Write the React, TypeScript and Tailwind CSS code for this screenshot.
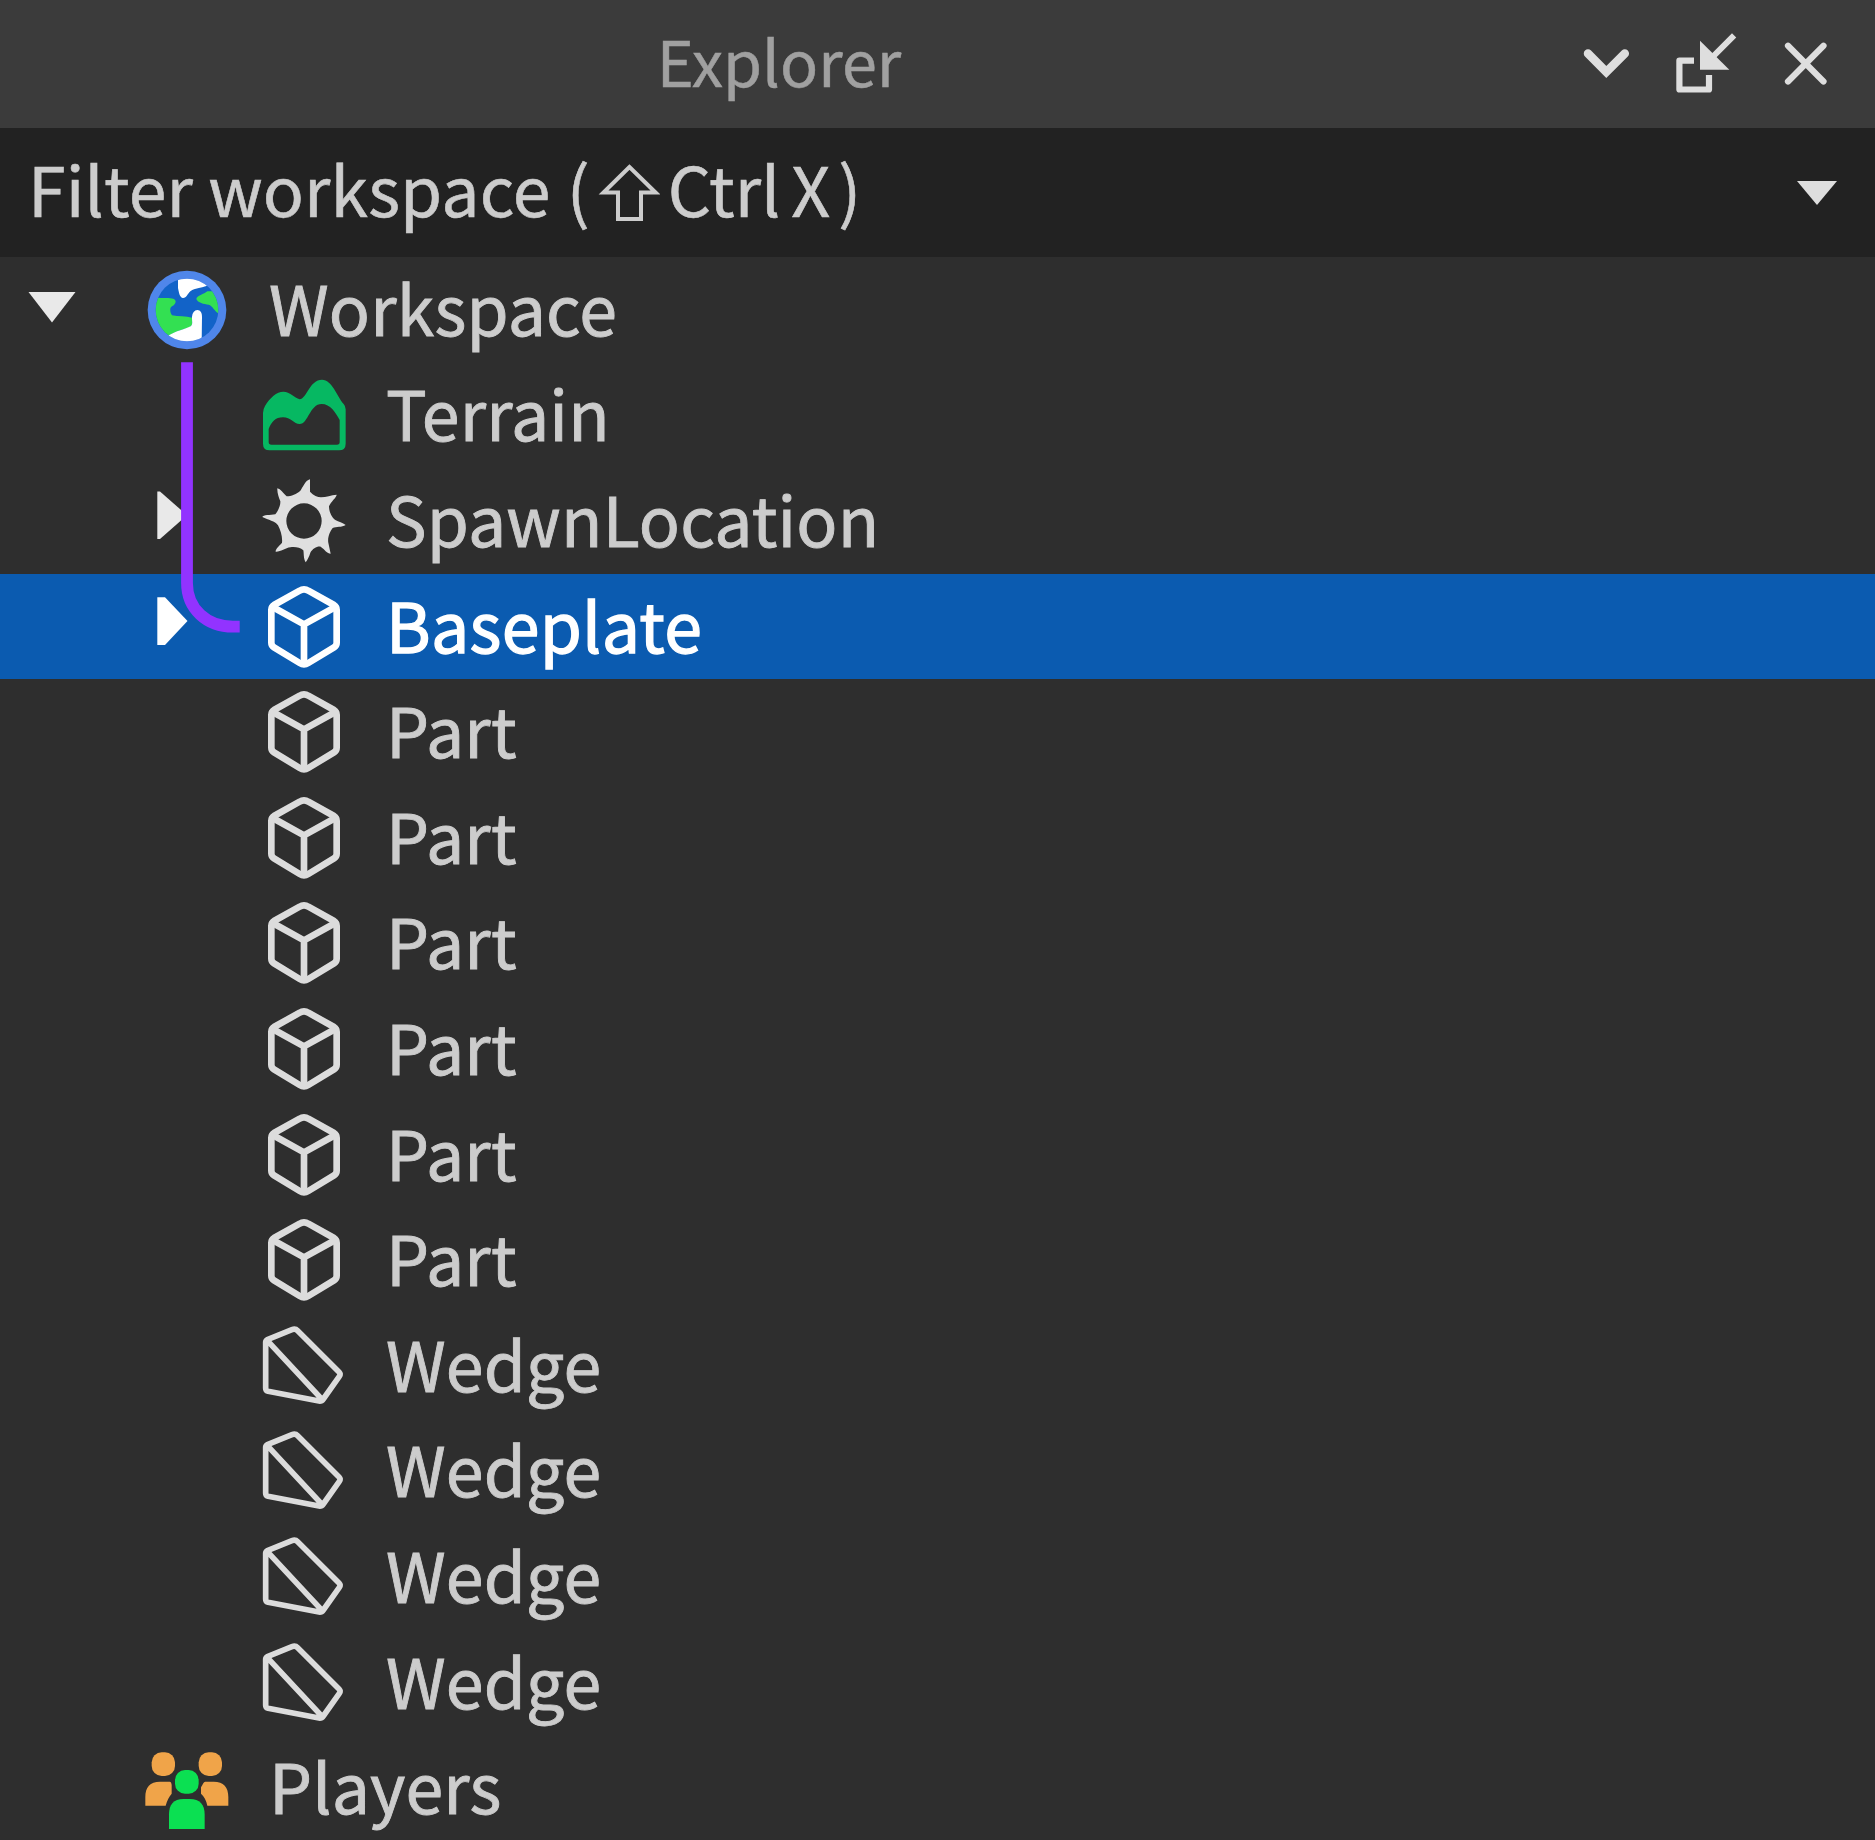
type Kind = "globe" | "terrain" | "spawn" | "cube" | "wedge" | "players";
type Item = { label: string; kind: Kind; depth: 0 | 1; arrow?: "down" | "right"; selected?: boolean };

const part: Item = { label: "Part", kind: "cube", depth: 1 };
const wedge: Item = { label: "Wedge", kind: "wedge", depth: 1 };
const items: Item[] = [
  { label: "Workspace", kind: "globe", depth: 0, arrow: "down" },
  { label: "Terrain", kind: "terrain", depth: 1 },
  { label: "SpawnLocation", kind: "spawn", depth: 1, arrow: "right" },
  { label: "Baseplate", kind: "cube", depth: 1, arrow: "right", selected: true },
  part, part, part, part, part, part,
  wedge, wedge, wedge, wedge,
  { label: "Players", kind: "players", depth: 0 },
];

function Icon({ kind }: { kind: Kind }) {
  const cls = "h-[88px] w-[88px] shrink-0";
  switch (kind) {
    case "globe":
      return (
        <svg className={cls} viewBox="39 32 264 264">
          <circle cx="171" cy="164" r="118" fill="#4f86ea" />
          <clipPath id="disc"><circle cx="171" cy="164" r="94" /></clipPath>
          <g clipPath="url(#disc)">
            <rect x="70" y="60" width="200" height="200" fill="#1263c8" />
            <path d="M144 60V98C147 112 148 124 158 128C170 129 172 115 182 107C195 98 210 99 232 91V60Z" fill="#fff" />
            <path d="M70 126C95 131 112 124 132 131C142 138 135 148 126 153C118 158 120 172 126 180C145 184 168 182 186 187C188 205 187 213 176 217C155 222 132 230 116 242L70 240Z" fill="#33e052" />
            <path d="M232 108C222 117 200 121 199 131C203 143 222 146 236 148C248 152 254 168 270 178V108Z" fill="#33e052" />
            <path d="M110 244C140 225 165 222 182 213C190 207 185 196 186 184C187 172 193 165 202 164C212 165 216 172 216 184L215 265H110Z" fill="#fff" />
          </g>
        </svg>
      );
    case "terrain":
      return (
        <svg className={cls} viewBox="30 4 264 264">
          <path fillRule="evenodd" fill="#06b862" d="M39 130Q39 119 45 109C60 84 80 66 100 66C120 66 133 84 149 89C172 85 179 30 216 30C246 30 260 78 281 103Q287 110 287 119V222Q287 242 267 242H59Q39 242 39 222ZM56 178V217Q56 225 64 225H261Q269 225 269 217V151C256 127 241 103 215 103C179 103 175 163 149 163C132 163 122 143 99 143C76 143 64 157 56 178Z" />
        </svg>
      );
    case "spawn":
      return (
        <svg className={cls} viewBox="30 321 264 264">
          <path fillRule="evenodd" fill="#dfdfdf" d="M180 328V365C190 376 203 382 213 382C229 382 243 375 260 374C260 382 242 395 237 409C237 423 244 442 256 450C266 455 278 459 287 465C275 473 259 469 248 474C240 484 232 503 235 518L242 551C231 551 225 539 212 530C201 528 188 536 181 548C178 558 172 571 167 577C160 566 162 550 160 541C150 532 135 530 121 532C106 534 91 546 77 545C76 536 90 526 96 518C98 502 92 481 84 466C75 452 55 451 37 441C39 434 61 436 76 433C84 423 92 406 91 394C87 384 81 368 82 355C92 357 99 369 110 379C124 379 140 372 151 362C159 352 165 332 180 328ZM162 400A53 53 0 1 0 162 506A53 53 0 1 0 162 400Z" />
        </svg>
      );
    case "cube":
      return (
        <svg className={cls} viewBox="780 308 264 264" fill="none" stroke="currentColor" strokeWidth="20" strokeLinejoin="round">
          <path d="M912 327Q919 327 925 331L1002 374Q1010 379 1010 388V487Q1010 496 1002 501L925 548Q912 556 899 548L822 501Q814 496 814 487V388Q814 379 822 374L899 331Q905 327 912 327Z" />
          <path d="M818 380L912 432L1006 380M912 432V552" />
        </svg>
      );
    case "wedge":
      return (
        <svg className={cls} viewBox="30 36 264 264" fill="none" stroke="#dcdcdc" strokeWidth="17" strokeLinejoin="round">
          <path d="M47 97Q47 92 52 89L126 59Q136 55 143 62L267 186Q273 192 268 199L220 267Q215 274 207 273L54 244Q47 242 47 235ZM52 92L216 268" />
        </svg>
      );
    case "players":
      return (
        <svg className={cls} viewBox="39 28 264 264">
          <g fill="#f0a449">
            <rect x="65" y="53" width="70" height="71" rx="30" />
            <rect x="206" y="53" width="70" height="71" rx="30" />
            <path d="M46 213V187C46 158 60 141 90 141H119Q124 141 125 151V177C117 186 111 198 107 213Z" />
            <path d="M295 213V187C295 158 281 141 251 141H226C220 142 219 149 213 158V177C222 184 229 198 232 213Z" />
          </g>
          <rect x="135" y="106" width="71" height="71" rx="30" fill="#0be052" />
          <path d="M117 283V239C117 210 131 193 160 193H180C209 193 224 210 224 239V283Z" fill="#0be052" />
        </svg>
      );
  }
}

function Arrow({ dir, selected }: { dir?: "down" | "right"; selected?: boolean }) {
  return (
    <svg className="h-[106px] w-[143px] shrink-0" viewBox="0 0 143 106" fill={selected ? "#fff" : "#e9e9e9"}>
      {dir === "down" && <path d="M28.5 35H75.5L52 65.5Z" />}
      {dir === "right" && <path d={selected ? "M40.3 23.2H48L70.5 47L48 71H40.3Z" : "M40.3 23.5H43L70 47.2L43 71H40.3Z"} />}
    </svg>
  );
}

function Row({ item }: { item: Item }) {
  const tone = item.selected ? "bg-[#0b5bb0] text-white" : "text-[#cccccc]";
  const label = item.selected
    ? "tracking-[0.3px] [-webkit-text-stroke:1.3px_#fff]"
    : "tracking-[0.15px] [-webkit-text-stroke:0.9px_#cccccc]";
  return (
    <div className={`flex h-[105.6px] shrink-0 items-center ${tone} ${item.depth ? "pl-[117px]" : ""}`}>
      <Arrow dir={item.arrow} selected={item.selected} />
      <span className={`flex ${item.selected ? "text-white" : "text-[#dcdcdc]"}`}><Icon kind={item.kind} /></span>
      <span className={`-mt-[6px] ml-[38px] text-[68px] leading-[100px] whitespace-pre ${label}`}>{item.label}</span>
    </div>
  );
}

export default function App() {
  return (
    <div className="relative flex h-[1840px] w-[1875px] flex-col overflow-hidden bg-[#2e2e2e] font-['Noto_Sans_CJK_SC','Noto_Sans',sans-serif]">
      <header className="flex h-32 shrink-0 items-center bg-[#3b3b3b]">
        <h1 className="-mt-[9px] w-[1558px] text-center text-[63px] leading-[90px] font-normal text-[#a0a0a0] [-webkit-text-stroke:0.5px_#a0a0a0]">Explorer</h1>
        <svg className="h-32 w-[317px]" viewBox="1558 0 317 128" fill="none" stroke="#dedede" strokeLinecap="round">
          <path d="M1588 53.5L1606.3 72L1624.8 53.5" strokeWidth="8.5" />
          <path d="M1694 60.7H1679.4V89.5H1709V75" strokeWidth="6.2" strokeLinecap="butt" strokeLinejoin="round" />
          <path d="M1700 40.7V69.7H1729.3Z" fill="#dedede" stroke="none" />
          <path d="M1710 59.5L1732 37.5" strokeWidth="6" strokeLinecap="square" />
          <path d="M1788 45.8L1823.5 81.5M1823.5 45.8L1788 81.5" strokeWidth="6.2" />
        </svg>
      </header>
      <div className="flex h-[129px] shrink-0 items-center justify-between bg-[#222222] text-[68px] leading-[100px] text-[#cccccc]">
        <div className="-mt-[10px] flex items-center whitespace-pre pl-[28px] [-webkit-text-stroke:0.6px_#cccccc]">
          <span className="tracking-[0.12px]">Filter workspace</span>
          <span className="ml-4">(</span>
          <svg className="mt-2 ml-[8px] h-[64px] w-[62px]" viewBox="598 159 62 64" fill="none" stroke="#cccccc" strokeWidth="4">
            <path d="M629.5 166L603.5 191.5H618V218H641V191.5H655.5Z" />
          </svg>
          <span className="ml-2">Ctrl</span>
          <span className="ml-[11px]">X</span>
          <span className="ml-2">)</span>
        </div>
        <svg className="mr-[37px] h-6 w-[42px]" viewBox="0 0 42 24" fill="#dedede"><path d="M1 0H41L21 24Z" /></svg>
      </div>
      <main className="flex flex-col">
        {items.map((item, i) => <Row key={i} item={item} />)}
      </main>
      <svg className="pointer-events-none absolute top-[362px] left-[181px] h-[272px] w-[60px]" viewBox="181 362 60 272" fill="none" stroke="#9233ff" strokeWidth="11.8">
        <path d="M187 362.3V583C187 609 207 626.7 233 626.7H239.7" />
      </svg>
    </div>
  );
}
